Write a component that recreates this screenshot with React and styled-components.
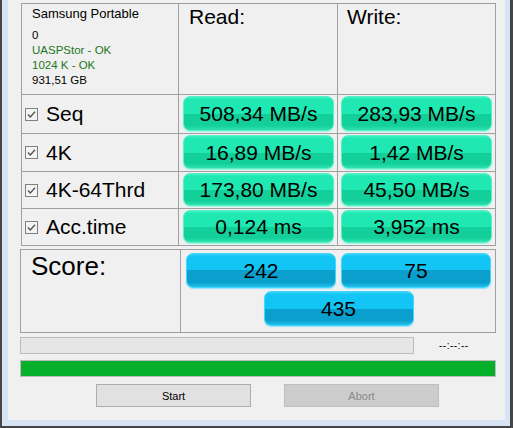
import React from 'react';
import styled, { createGlobalStyle } from 'styled-components';

const GlobalStyle = createGlobalStyle`
  html, body {
    margin: 0;
    padding: 0;
    background: #f0f0f0;
  }
  body {
    font-family: "Liberation Sans", Arial, sans-serif;
    color: #000;
  }
`;

const Frame = styled.div`
  box-sizing: border-box;
  width: 513px;
  height: 428px;
  border-style: solid;
  border-color: #464646;
  border-width: 0 3px 2px 2px;
  background: #d6e4f3;
`;

const Client = styled.div`
  box-sizing: border-box;
  width: 497px;
  height: 420px;
  margin-left: 6px;
  background: #f0f0f0;
  padding: 3px 0 0 12px;
  display: flex;
  flex-direction: column;
`;

const ResultsGrid = styled.div`
  display: grid;
  grid-template-columns: 156px 158px 157px;
  grid-template-rows: 90px 38px 37px 36px 36px;
  gap: 1px;
  width: 473px;
  margin-left: 1px;
  border: 1px solid #a0a0a0;
  background: #a0a0a0;
`;

const Cell = styled.div`
  background: #f0f0f0;
  box-sizing: border-box;
  min-width: 0;
`;

const InfoCell = styled(Cell)`
  padding: 2px 0 0 10px;
`;

const DeviceName = styled.div`
  font-size: 13px;
  line-height: 15px;
`;

const InfoLines = styled.div`
  margin-top: 7px;
  font-size: 11.5px;
  line-height: 15px;
`;

const InfoLine = styled.div`
  color: ${({ $ok }) => ($ok ? '#1d761d' : '#000')};
`;

const HeadCell = styled(Cell)`
  padding: 1px 0 0 ${({ $pad }) => $pad}px;
  font-size: 21px;
  line-height: 24px;
`;

const LabelCell = styled(Cell)`
  display: flex;
  align-items: center;
  gap: 8px;
  padding-left: 3px;
  font-size: 21px;
`;

const ValueCell = styled(Cell)`
  display: flex;
  padding: 1px 3px 2px ${({ $left }) => $left}px;
`;

const Pill = styled.div`
  flex: 1;
  box-sizing: border-box;
  display: flex;
  align-items: center;
  justify-content: center;
  padding-top: 1px;
  border-radius: 7px;
  font-size: 21px;
  color: #000;
`;

const GreenPill = styled(Pill)`
  border: 1px solid #5cefc7;
  background: linear-gradient(
    to bottom,
    #3ef3c4 0,
    #1fe8b2 8%,
    #1fe8b2 52%,
    #13cf99 52%,
    #13cf99 86%,
    #2fe2b0 100%
  );
  box-shadow: 0 1px 1px #9af6dd;
`;

const BluePill = styled(Pill)`
  border: 1px solid #45d6fb;
  background: linear-gradient(
    to bottom,
    #33d3fd 0,
    #12c5f5 8%,
    #12c5f5 50%,
    #0a9fcc 50%,
    #0a9fcc 86%,
    #23c0ec 100%
  );
  box-shadow: 0 1px 1px #8fe4fb;
`;

const ScoreBox = styled.div`
  display: grid;
  grid-template-columns: 159px 314px;
  gap: 1px;
  width: 474px;
  height: 82px;
  margin-top: 3px;
  border: 1px solid #a0a0a0;
  background: #a0a0a0;
`;

const ScoreLabel = styled(Cell)`
  padding: 1px 0 0 10px;
  font-size: 26px;
  line-height: 30px;
`;

const ScoreCell = styled(Cell)`
  display: grid;
  grid-template-columns: 150px 150px;
  grid-template-rows: 35px 35px;
  column-gap: 5px;
  row-gap: 3px;
  padding: 3px 0 0 5px;
`;

const TotalPill = styled(BluePill)`
  grid-column: 1 / span 2;
  justify-self: center;
  width: 150px;
`;

const ProgressRow = styled.div`
  display: flex;
  align-items: center;
  margin-top: 4px;
`;

const Bar = styled.div`
  box-sizing: border-box;
  height: 17px;
  width: ${({ $w }) => $w}px;
  border: 1px solid #bcbcbc;
  background: ${({ $fill }) => $fill};
`;

const Timer = styled.span`
  margin-left: 25px;
  font-size: 10px;
  letter-spacing: 0.5px;
  color: #000;
`;

const DoneBar = styled(Bar)`
  margin-top: 6px;
`;

const ButtonRow = styled.div`
  display: flex;
  gap: 33px;
  margin: 7px 0 0 76px;
`;

const Button = styled.button`
  box-sizing: border-box;
  width: 155px;
  height: 23px;
  padding: 0;
  border: 1px solid ${({ disabled }) => (disabled ? '#bfbfbf' : '#adadad')};
  background: ${({ disabled }) => (disabled ? '#cccccc' : '#e1e1e1')};
  color: ${({ disabled }) => (disabled ? '#8a8a8a' : '#000')};
  font-family: "Liberation Sans", Arial, sans-serif;
  font-size: 11px;
`;

const Check = () => (
  <svg width="13" height="13" viewBox="0 0 13 13">
    <rect x="0.5" y="0.5" width="12" height="12" fill="#f4f4f4" stroke="#808080" />
    <path d="M3 6.5 L5.3 9 L10 3.8" fill="none" stroke="#505050" strokeWidth="1.3" />
  </svg>
);

const rows = [
  { name: 'Seq', read: '508,34 MB/s', write: '283,93 MB/s' },
  { name: '4K', read: '16,89 MB/s', write: '1,42 MB/s' },
  { name: '4K-64Thrd', read: '173,80 MB/s', write: '45,50 MB/s' },
  { name: 'Acc.time', read: '0,124 ms', write: '3,952 ms' },
];

export default function App() {
  return (
    <>
      <GlobalStyle />
      <Frame>
        <Client>
          <ResultsGrid>
            <InfoCell>
              <DeviceName>Samsung Portable</DeviceName>
              <InfoLines>
                <InfoLine>0</InfoLine>
                <InfoLine $ok>UASPStor - OK</InfoLine>
                <InfoLine $ok>1024 K - OK</InfoLine>
                <InfoLine>931,51 GB</InfoLine>
              </InfoLines>
            </InfoCell>
            <HeadCell $pad={10}>Read:</HeadCell>
            <HeadCell $pad={9}>Write:</HeadCell>
            {rows.map(r => (
              <React.Fragment key={r.name}>
                <LabelCell>
                  <Check />
                  {r.name}
                </LabelCell>
                <ValueCell $left={4}>
                  <GreenPill>{r.read}</GreenPill>
                </ValueCell>
                <ValueCell $left={3}>
                  <GreenPill>{r.write}</GreenPill>
                </ValueCell>
              </React.Fragment>
            ))}
          </ResultsGrid>
          <ScoreBox>
            <ScoreLabel>Score:</ScoreLabel>
            <ScoreCell>
              <BluePill>242</BluePill>
              <BluePill>75</BluePill>
              <TotalPill>435</TotalPill>
            </ScoreCell>
          </ScoreBox>
          <ProgressRow>
            <Bar $w={394} $fill="#e6e6e6" />
            <Timer>--:--:--</Timer>
          </ProgressRow>
          <DoneBar $w={476} $fill="#06b02a" />
          <ButtonRow>
            <Button>Start</Button>
            <Button disabled>Abort</Button>
          </ButtonRow>
        </Client>
      </Frame>
    </>
  );
}
